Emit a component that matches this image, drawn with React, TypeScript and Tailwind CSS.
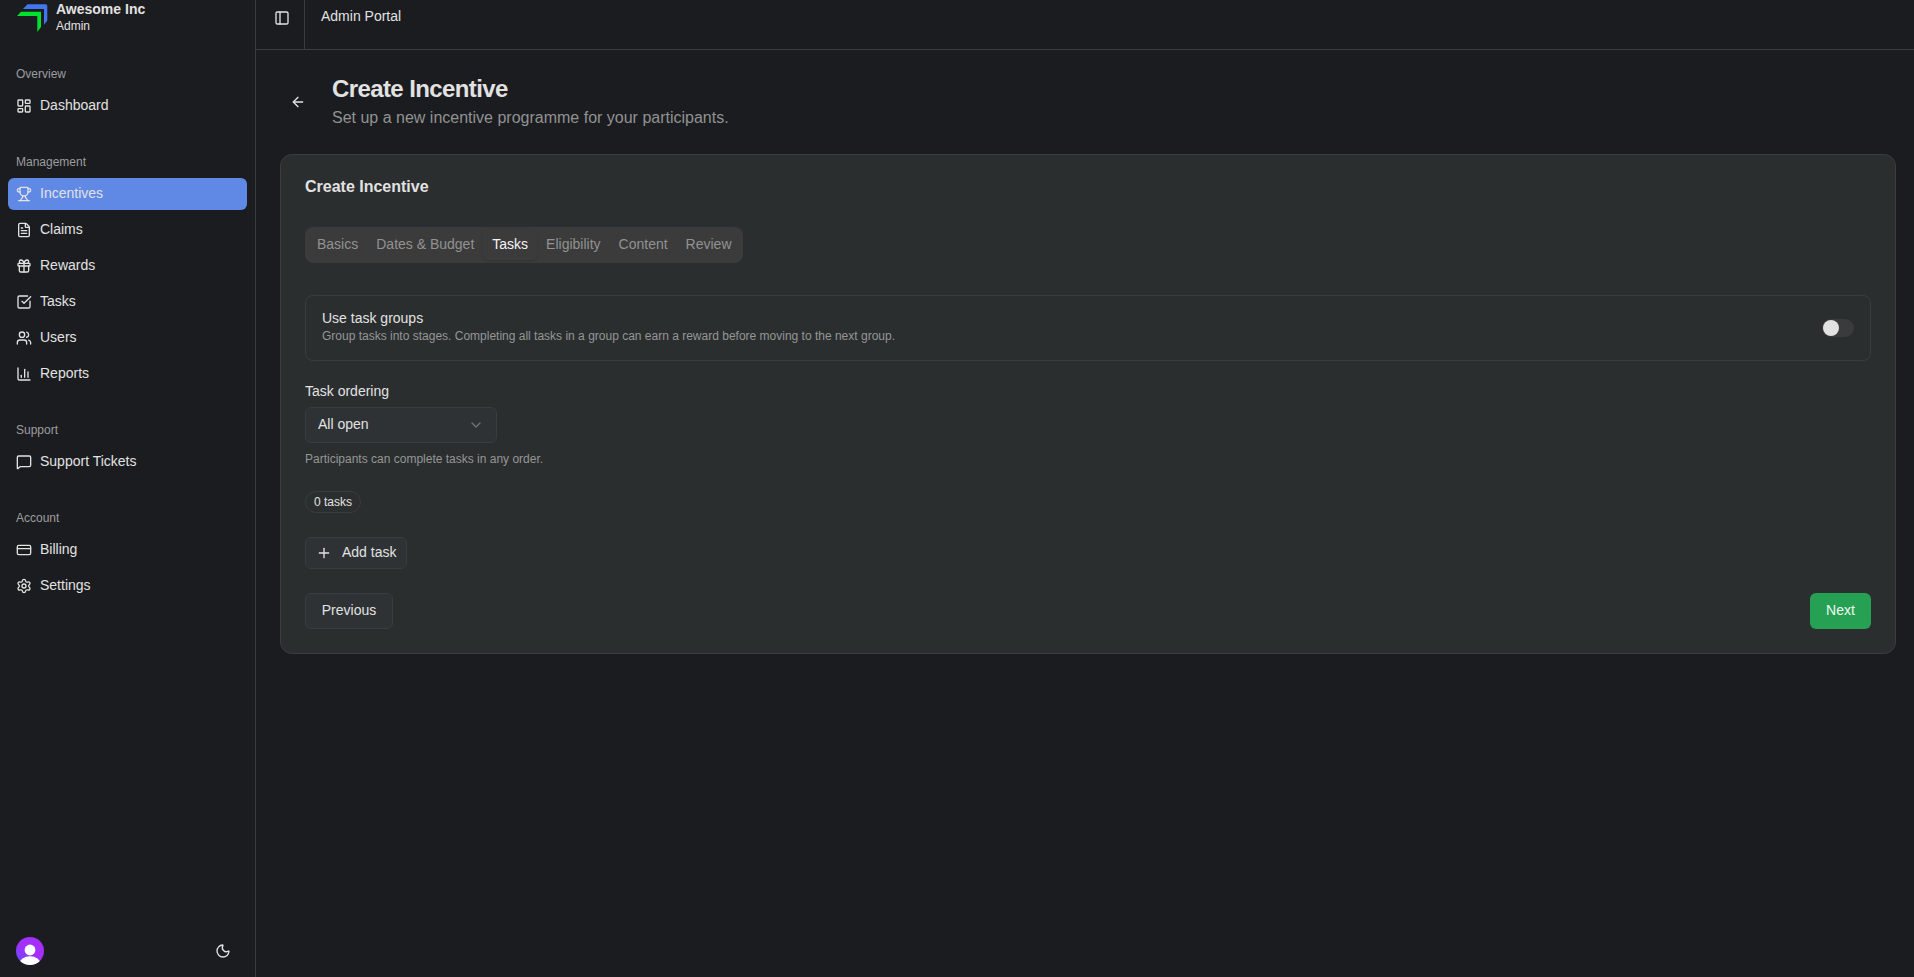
import React from "react";
import {
  ArrowLeft,
  ChartColumn,
  ChevronDown,
  CreditCard,
  FileText,
  Gift,
  LayoutDashboard,
  MessageSquare,
  Moon,
  PanelLeft,
  Plus,
  Settings,
  SquareCheckBig,
  Trophy,
  Users,
  type LucideIcon,
} from "lucide-react";

type Item = { label: string; icon: LucideIcon; active?: boolean };

const groups: { title: string; items: Item[] }[] = [
  { title: "Overview", items: [{ label: "Dashboard", icon: LayoutDashboard }] },
  {
    title: "Management",
    items: [
      { label: "Incentives", icon: Trophy, active: true },
      { label: "Claims", icon: FileText },
      { label: "Rewards", icon: Gift },
      { label: "Tasks", icon: SquareCheckBig },
      { label: "Users", icon: Users },
      { label: "Reports", icon: ChartColumn },
    ],
  },
  { title: "Support", items: [{ label: "Support Tickets", icon: MessageSquare }] },
  {
    title: "Account",
    items: [
      { label: "Billing", icon: CreditCard },
      { label: "Settings", icon: Settings },
    ],
  },
];

const tabs = ["Basics", "Dates & Budget", "Tasks", "Eligibility", "Content", "Review"];

function Logo() {
  return (
    <svg width="32" height="32" viewBox="0 0 32 32" className="shrink-0">
      <path d="M11.5 4.3H29.5Q31.3 4.3 31.3 6.1V20.5L28 24.8V9H7Z" fill="#4277f0" />
      <path d="M5 11.7H25V27L21.3 32V16H1Z" fill="#00e02f" />
    </svg>
  );
}

function Avatar() {
  return (
    <svg width="28" height="28" viewBox="0 0 28 28">
      <defs>
        <linearGradient id="avatarFill" x1="0.75" y1="0.2" x2="0.1" y2="1">
          <stop offset="0.4" stopColor="#a42ffb" />
          <stop offset="1" stopColor="#5f4bff" />
        </linearGradient>
        <clipPath id="avatarClip">
          <circle cx="14" cy="14" r="14" />
        </clipPath>
      </defs>
      <g clipPath="url(#avatarClip)">
        <rect width="28" height="28" fill="url(#avatarFill)" />
        <circle cx="14" cy="13" r="5.4" fill="#fff" />
        <ellipse cx="14" cy="26.5" rx="10.5" ry="7.2" fill="#fff" />
      </g>
    </svg>
  );
}

function Sidebar() {
  return (
    <aside className="flex w-64 shrink-0 flex-col border-r border-[#3c3c3e]">
      <div className="flex h-[50px] items-start gap-2 pl-4">
        <Logo />
        <div className="flex flex-col">
          <span className="text-sm leading-[18px] font-bold">Awesome Inc</span>
          <span className="text-xs leading-4">Admin</span>
        </div>
      </div>
      <nav className="flex flex-col gap-2">
        {groups.map((g) => (
          <div key={g.title} className="flex flex-col p-2">
            <div className="flex h-8 items-center px-2 text-xs text-[#9d9d9f]">{g.title}</div>
            <ul className="flex flex-col gap-1">
              {g.items.map(({ label, icon: Icon, active }) => (
                <li
                  key={label}
                  className={
                    active
                      ? "flex h-8 items-center gap-2 rounded-md bg-[#6089e6] px-2"
                      : "flex h-8 items-center gap-2 rounded-md px-2"
                  }
                >
                  <Icon size={16} />
                  <span className="pb-0.5 text-sm">{label}</span>
                </li>
              ))}
            </ul>
          </div>
        ))}
      </nav>
      <div className="mt-auto flex items-center justify-between pr-6 pb-3 pl-4">
        <Avatar />
        <Moon size={16} />
      </div>
    </aside>
  );
}

export default function App() {
  return (
    <div className="flex h-[977px] w-full overflow-hidden bg-[#1b1c1f] font-['Liberation_Sans',Arial,sans-serif] text-[#e2e2e2]">
      <Sidebar />
      <main className="flex min-w-0 flex-1 flex-col">
        <header className="flex h-[50px] shrink-0 border-b border-[#3c3c3e]">
          <div className="flex w-[49px] justify-center border-r border-[#3c3c3e] pt-2.5">
            <PanelLeft size={16} className="ml-1" />
          </div>
          <span className="pt-1.5 pl-4 text-sm">Admin Portal</span>
        </header>

        <div className="flex flex-col pr-[18px] pl-6">
          <div className="mt-6 flex items-center gap-[26px] pl-2.5">
            <ArrowLeft size={16} />
            <div>
              <h1 className="pb-0.5 text-2xl leading-[30px] font-bold tracking-tight">Create Incentive</h1>
              <p className="text-base leading-6 text-[#929293]">
                Set up a new incentive programme for your participants.
              </p>
            </div>
          </div>

          <section className="mt-6 flex h-[500px] flex-col rounded-xl border border-[#3b3d3e] bg-[#2b2e2f] px-6">
            <h2 className="mt-5 text-base leading-6 font-bold">Create Incentive</h2>

            <div className="mt-[28px] flex h-9 w-[438px] rounded-lg bg-[#3b3b3b] p-[3px] text-sm text-[#929292]">
              {tabs.map((t) => (
                <span
                  key={t}
                  className={
                    t === "Tasks"
                      ? "flex h-[30px] items-center rounded-md px-[9px] pb-0.5 text-[#f4f4f4] shadow-sm"
                      : "flex h-[30px] items-center rounded-md px-[9px] pb-0.5"
                  }
                >
                  <span className="whitespace-nowrap">{t}</span>
                </span>
              ))}
            </div>

            <div className="mt-8 flex h-[66px] shrink-0 items-center justify-between rounded-lg border border-[#3a3c3d] px-4">
              <div className="pb-0.5">
                <p className="pb-0.5 text-sm leading-4">Use task groups</p>
                <p className="text-xs leading-4 text-[#959696]">
                  Group tasks into stages. Completing all tasks in a group can earn a reward before moving to the next
                  group.
                </p>
              </div>
              <div className="flex h-[18px] w-8 items-center rounded-full bg-[#3a3b3c] px-px">
                <span className="size-4 rounded-full bg-[#e2e2e2]" />
              </div>
            </div>

            <p className="mt-5 text-sm leading-5">Task ordering</p>
            <div className="mt-1.5 flex h-9 w-48 shrink-0 items-center justify-between rounded-md border border-[#3a3c3d] bg-[#2f3235] px-3 text-sm">
              <span className="pb-0.5">All open</span>
              <ChevronDown size={16} className="text-[#6f7173]" />
            </div>
            <p className="mt-2 text-xs leading-4 text-[#959696]">Participants can complete tasks in any order.</p>

            <span className="mt-6 flex h-[22px] w-14 items-center justify-center rounded-full border border-[#3a3c3d] text-xs">
              0 tasks
            </span>

            <button className="mt-6 flex h-8 w-[102px] items-center gap-2.5 rounded-md border border-[#3a3c3d] bg-[#2f3235] pl-2.5 text-sm">
              <Plus size={16} />
              <span className="pb-0.5 whitespace-nowrap">Add task</span>
            </button>

            <div className="mt-6 flex justify-between text-sm">
              <button className="h-9 w-[88px] rounded-md border border-[#3a3c3d] bg-[#2f3235] pb-0.5">Previous</button>
              <button className="h-9 w-[61px] rounded-md bg-[#26a053] pb-0.5 text-[#f2f8f4]">Next</button>
            </div>
          </section>
        </div>
      </main>
    </div>
  );
}
